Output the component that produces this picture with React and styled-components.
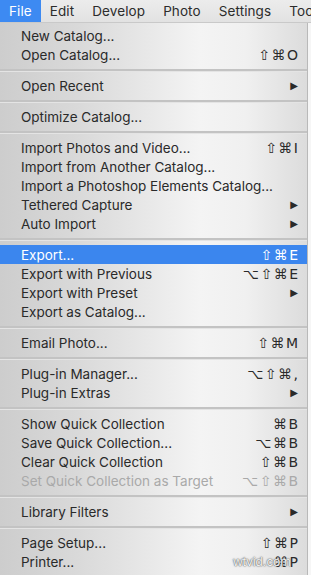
import React from 'react'
import styled, { createGlobalStyle } from 'styled-components'

const GlobalStyle = createGlobalStyle`
  html, body {
    margin: 0;
    padding: 0;
    background: #f4f4f4;
  }
  body {
    font-family: Inter, "Noto Sans", "DejaVu Sans", sans-serif;
    -webkit-font-smoothing: antialiased;
  }
`

const Screen = styled.div`
  position: relative;
  width: 311px;
  height: 575px;
  overflow: hidden;
  background: #f6f6f6;
`

const MenuBar = styled.div`
  display: flex;
  align-items: stretch;
  height: 22px;
  border-bottom: 1px solid #c9c9c9;
  background: linear-gradient(to bottom, #ececec, #e2e2e2);
`

const BarItem = styled.div`
  display: flex;
  align-items: center;
  padding: 0 9px;
  background: ${props => (props.active ? '#3d8af2' : 'transparent')};
  color: ${props => (props.active ? '#ffffff' : '#2c2c2c')};
  font-size: 13.5px;
  letter-spacing: 0.1px;
  white-space: nowrap;
`

const Menu = styled.div`
  width: 307px;
  padding: 3px 0 4px 0;
  background: linear-gradient(
    to right,
    #cdcdcd 0%,
    #d9d9d9 25%,
    #e6e6e6 45%,
    #f4f4f4 65%,
    #f0f0f0 80%,
    #dcdcdc 100%
  );
  box-shadow: 1px 0 0 #b9b9b9;
`

const Row = styled.div`
  display: flex;
  align-items: center;
  justify-content: space-between;
  height: 19px;
  padding: 0 9px 0 21px;
  background: ${props => (props.active ? '#3b86ee' : 'transparent')};
  color: ${props =>
    props.active ? '#ffffff' : props.disabled ? '#a9a9a9' : '#2a2a2a'};
  font-size: 13.5px;
  white-space: nowrap;
`

const Shortcut = styled.span`
  font-family: "DejaVu Sans", Inter, sans-serif;
  font-size: 14px;
  letter-spacing: 1.5px;
  margin-right: -1.5px;
`

const Arrow = styled.span`
  font-family: "DejaVu Sans", sans-serif;
  font-size: 10px;
  color: ${props => (props.disabled ? '#a9a9a9' : '#2a2a2a')};
`

const Separator = styled.div`
  height: 12px;
  display: flex;
  align-items: center;

  &::before {
    content: '';
    flex: 1;
    height: 2px;
    background: #c3c3c3;
    border-bottom: 1px solid #e4e4e4;
  }
`

const Watermark = styled.div`
  position: absolute;
  right: 20px;
  bottom: 6px;
  color: #f2f2f2;
  font-family: "Liberation Sans", sans-serif;
  font-size: 13px;
  text-shadow: 0 0 2px #666666, 0 0 1px #444444;
`

const sections = [
  [
    { label: 'New Catalog...' },
    { label: 'Open Catalog...', keys: '⇧⌘O' }
  ],
  [{ label: 'Open Recent', sub: true }],
  [{ label: 'Optimize Catalog...' }],
  [
    { label: 'Import Photos and Video...', keys: '⇧⌘I' },
    { label: 'Import from Another Catalog...' },
    { label: 'Import a Photoshop Elements Catalog...' },
    { label: 'Tethered Capture', sub: true },
    { label: 'Auto Import', sub: true }
  ],
  [
    { label: 'Export...', keys: '⇧⌘E', active: true },
    { label: 'Export with Previous', keys: '⌥⇧⌘E' },
    { label: 'Export with Preset', sub: true },
    { label: 'Export as Catalog...' }
  ],
  [{ label: 'Email Photo...', keys: '⇧⌘M' }],
  [
    { label: 'Plug-in Manager...', keys: '⌥⇧⌘,' },
    { label: 'Plug-in Extras', sub: true }
  ],
  [
    { label: 'Show Quick Collection', keys: '⌘B' },
    { label: 'Save Quick Collection...', keys: '⌥⌘B' },
    { label: 'Clear Quick Collection', keys: '⇧⌘B' },
    { label: 'Set Quick Collection as Target', keys: '⌥⇧⌘B', disabled: true }
  ],
  [{ label: 'Library Filters', sub: true }],
  [
    { label: 'Page Setup...', keys: '⇧⌘P' },
    { label: 'Printer...', keys: '⌘P' }
  ]
]

const menus = ['File', 'Edit', 'Develop', 'Photo', 'Settings', 'Tools']

const App = () => (
  <Screen>
    <GlobalStyle />
    <MenuBar>
      {menus.map((m, i) => (
        <BarItem key={m} active={i === 0}>
          {m}
        </BarItem>
      ))}
    </MenuBar>
    <Menu>
      {sections.map((items, s) => (
        <React.Fragment key={s}>
          {s > 0 && <Separator />}
          {items.map(item => (
            <Row key={item.label} active={item.active} disabled={item.disabled}>
              <span>{item.label}</span>
              {item.keys && <Shortcut>{item.keys}</Shortcut>}
              {item.sub && <Arrow>▶</Arrow>}
            </Row>
          ))}
        </React.Fragment>
      ))}
    </Menu>
    <Watermark>wtvid.com</Watermark>
  </Screen>
)

export default App
